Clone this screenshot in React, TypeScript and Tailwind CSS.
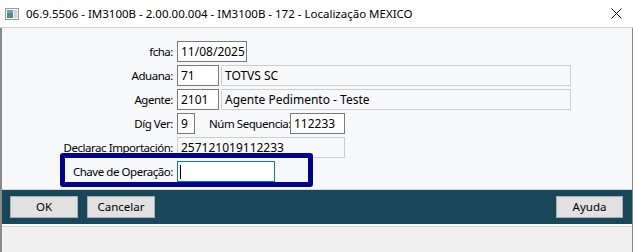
import React from "react"

function WinIcon() {
  return (
    <svg width="14" height="12" viewBox="0 0 14 12">
      <rect x="0.5" y="0.5" width="13" height="11" fill="#f4f4f4" stroke="#9a9a9a" />
      <rect x="2" y="2" width="6" height="8" fill="#4f8d7e" />
      <rect x="2" y="2" width="6" height="3" fill="#6aa0c8" />
      <rect x="9" y="2" width="3" height="8" fill="#c9d3dc" />
    </svg>
  )
}

function CloseIcon() {
  return (
    <svg width="11" height="11" viewBox="0 0 11 11">
      <path d="M0.5 0.5 L10.5 10.5 M10.5 0.5 L0.5 10.5" stroke="#111" strokeWidth="1" />
    </svg>
  )
}

function Label({ text }: { text: string }) {
  return (
    <div className="w-[172px] shrink-0 text-right pr-[1px] whitespace-nowrap text-[11.5px] tracking-[-0.45px]">{text}</div>
  )
}

function Field({ value, w, disabled }: { value?: string; w: string; disabled?: boolean }) {
  return (
    <div
      className={`${w} h-[21px] shrink-0 flex items-center pl-[3px] whitespace-nowrap overflow-hidden ${
        disabled ? "bg-[#f7f8fa] border border-[#cdcdcd]" : "bg-white border border-[#7a7a7a]"
      }`}
    >
      {value}
    </div>
  )
}

export default function App() {
  return (
    <div className="w-[633px] h-[252px] overflow-hidden bg-[#f0f0f0] text-[12px] text-black font-['Noto_Sans',sans-serif] leading-none">
      {/* barra de título */}
      <div className="h-[28px] bg-white border-b border-[#d2d2d2] flex items-center pl-[5px] pr-[11px]">
        <WinIcon />
        <span className="ml-[7px] whitespace-nowrap text-[11.5px]">
          06.9.5506 - IM3100B - 2.00.00.004 - IM3100B - 172 - Localização MEXICO
        </span>
        <div className="ml-auto flex">
          <CloseIcon />
        </div>
      </div>

      <div className="border-l-2 border-r border-[#8a8a8a] h-[224px]">
        {/* campos */}
        <div className="bg-[#f7f8fa] pt-[13px] pb-[7px] flex flex-col gap-[3px] border-b border-[#d6d6d6]">
          <div className="flex items-center">
            <Label text="fcha:" />
            <div className="ml-[3px]">
              <Field value="11/08/2025" w="w-[70px]" />
            </div>
          </div>
          <div className="flex items-center">
            <Label text="Aduana:" />
            <div className="ml-[3px] flex gap-[2px]">
              <Field value="71" w="w-[42px]" />
              <Field value="TOTVS SC" w="w-[350px]" disabled />
            </div>
          </div>
          <div className="flex items-center">
            <Label text="Agente:" />
            <div className="ml-[3px] flex gap-[2px]">
              <Field value="2101" w="w-[42px]" />
              <Field value="Agente Pedimento - Teste" w="w-[350px]" disabled />
            </div>
          </div>
          <div className="flex items-center">
            <Label text="Díg Ver:" />
            <div className="ml-[3px] flex items-center">
              <Field value="9" w="w-[18px]" />
              <span className="ml-[14px] w-[78px] text-right whitespace-nowrap text-[11.5px] tracking-[-0.45px]">
                Núm Sequencia:
              </span>
              <div className="ml-[3px]">
                <Field value="112233" w="w-[55px]" />
              </div>
            </div>
          </div>
          <div className="flex items-center">
            <Label text="Declarac Importación:" />
            <div className="ml-[3px]">
              <Field value="257121019112233" w="w-[168px]" disabled />
            </div>
          </div>
          <div className="flex items-center relative">
            <Label text="Chave de Operação:" />
            <div className="ml-[3px] w-[98px] h-[21px] bg-white border border-[#0078d7] flex items-center pl-[2px]">
              <div className="w-[1px] h-[14px] bg-black" />
            </div>
            <div className="absolute left-[58px] top-[-8px] w-[253px] h-[34px] border-[5px] border-[#02038c] rounded-[3px]" />
          </div>
        </div>

        {/* botões */}
        <div className="h-[34px] bg-[#19475a] flex items-start pt-[6px] pl-[8px] pr-[9px] text-[11.5px]">
          <button className="w-[68px] h-[22px] bg-[#e1e1e1] border border-[#adadad]">OK</button>
          <button className="ml-[9px] w-[68px] h-[22px] bg-[#e1e1e1] border border-[#adadad]">Cancelar</button>
          <button className="ml-auto w-[67px] h-[22px] bg-[#e1e1e1] border border-[#adadad]">Ayuda</button>
        </div>
        <div className="h-[3px] bg-[#f7f8fa] border-b border-[#d2d2d2]" />
      </div>
    </div>
  )
}
